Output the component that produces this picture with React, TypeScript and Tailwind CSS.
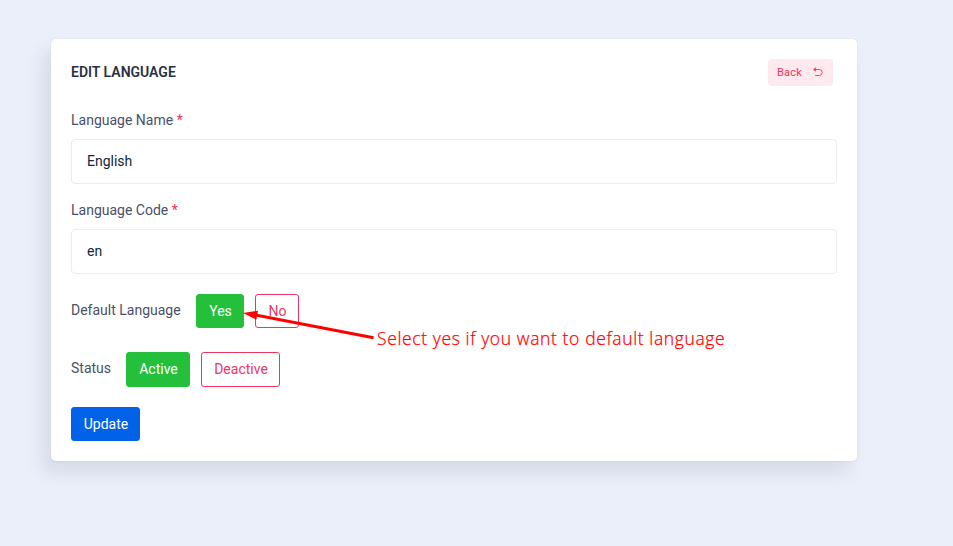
import React from "react";

type FieldProps = { label: string; value: string; className?: string };

function Field({ label, value, className = "" }: FieldProps) {
  return (
    <div className={className}>
      <label className="block h-[21px] text-[14px] leading-[21px] text-[#4a5066]">
        {label} <span className="text-[#ee335e]">*</span>
      </label>
      <input
        className="mt-2 block h-[45px] w-full rounded-[4px] border border-[#e9ebf5] bg-white px-[15px] pb-[2px] text-[14px] text-[#12263f] outline-none"
        defaultValue={value}
      />
    </div>
  );
}

const button = "flex items-center justify-center rounded-[3px] border pl-px text-[14px] leading-[21px]";
const solidGreen = "border-[#24c03c] bg-[#24c03c] text-white";
const outlineRed = "border-[#ee335e] bg-white text-[#e9366a]";

export default function App() {
  return (
    <div className="relative h-[546px] w-[953px] overflow-hidden bg-[#ebeffa] pl-[51px] pt-[39px] font-['Roboto',sans-serif]">
      <main className="h-[422px] w-[806px] rounded-[5px] bg-white px-5 pt-5 shadow-[-8px_12px_18px_0_rgba(25,42,70,0.1),0_0_0_1px_rgba(225,228,240,0.6)]">
        <header className="flex h-[27px] items-center justify-between pr-1">
          <h1 className="text-[14px] font-semibold text-[#283144]">EDIT LANGUAGE</h1>
          <button className="flex h-[27px] w-[65px] items-center rounded-[4px] bg-[#fde9ee] pl-[9px] pt-px text-[11px] tracking-[0.2px] text-[#ee335e]">
            Back
            <svg className="mb-[3px] ml-[11px]" width="10" height="10" viewBox="0 0 10 10" fill="none" stroke="currentColor" strokeWidth="0.9">
              <path d="M2.7 0.6 0.9 2.5l1.8 1.9M0.9 2.5h5.3a3 3 0 0 1 0 6H2.2" />
              <path d="M2.7 0.6v3.8L0.9 2.5Z" fill="currentColor" stroke="none" />
            </svg>
          </button>
        </header>
        <Field label="Language Name" value="English" className="mt-6 w-[766px]" />
        <Field label="Language Code" value="en" className="mt-4 w-[766px]" />
        <div className="mt-5 flex h-[34px] items-center">
          <span className="mr-[15px] w-[110px] whitespace-nowrap pb-[2px] text-[14px] text-[#4a5066]">Default Language</span>
          <button className={`${button} ${solidGreen} mr-[11px] h-[34px] w-12`}>Yes</button>
          <button className={`${button} ${outlineRed} h-[34px] w-11`}>No</button>
        </div>
        <div className="mt-6 flex h-[35px] items-center">
          <span className="mr-[15px] w-10 pb-[2px] text-[14px] text-[#4a5066]">Status</span>
          <button className={`${button} ${solidGreen} mr-[11px] h-[35px] w-16`}>Active</button>
          <button className={`${button} ${outlineRed} h-[35px] w-[79px]`}>Deactive</button>
        </div>
        <button className={`${button} mt-5 h-[34px] w-[69px] border-[#0162e8] bg-[#0162e8] text-white`}>Update</button>
      </main>
      <svg className="absolute left-[240px] top-[305px]" width="140" height="40" viewBox="0 0 140 40">
        <path d="M14 9.7 133.5 32.7" stroke="#ff0000" strokeWidth="3" />
        <path d="M3 8 18 5.7 16.3 14.7Z" fill="#ff0000" />
      </svg>
      <span className="absolute left-[377px] top-[325px] whitespace-nowrap font-['Open_Sans',sans-serif] text-[17.5px] font-light leading-[26px] tracking-[0.62px] text-[#ff0000] [-webkit-text-stroke:0.25px_#ff0000]">
        Select yes if you want to default language
      </span>
    </div>
  );
}
